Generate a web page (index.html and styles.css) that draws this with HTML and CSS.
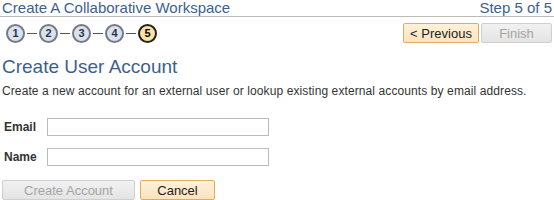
FILE: index.html
```html
<!DOCTYPE html>
<html lang="en">
<head>
    <meta charset="UTF-8">
    <title>Create A Collaborative Workspace</title>
    <link rel="stylesheet" href="styles.css">
</head>
<body>

<div class="page-header">
    <span class="page-title">Create A Collaborative Workspace</span>
    <span class="page-step">Step 5 of 5</span>
</div>

<div class="train-bar">
    <div class="train">
        <span class="stop">1</span><span class="link"></span>
        <span class="stop">2</span><span class="link"></span>
        <span class="stop">3</span><span class="link"></span>
        <span class="stop">4</span><span class="link"></span>
        <span class="stop current">5</span>
    </div>
    <div class="nav-buttons">
        <button class="btn btn-primary">&lt; Previous</button>
        <button class="btn btn-disabled" disabled>Finish</button>
    </div>
</div>

<h1 class="section-title">Create User Account</h1>
<p class="intro">Create a new account for an external user or lookup existing external accounts by email address.</p>

<div class="form">
    <div class="form-row">
        <label for="email">Email</label>
        <input type="text" id="email">
    </div>
    <div class="form-row">
        <label for="name">Name</label>
        <input type="text" id="name">
    </div>
</div>

<div class="form-buttons">
    <button class="btn btn-disabled btn-wide" disabled>Create Account</button>
    <button class="btn btn-primary btn-cancel">Cancel</button>
</div>

</body>
</html>
```

FILE: styles.css
```css
body {
    margin: 0;
    padding: 0 2px;
    width: 550px;
    font-family: "Liberation Sans", Arial, sans-serif;
    font-size: 12px;
    color: #333;
    background: #fff;
}
.page-header {
    display: flex;
    justify-content: space-between;
    align-items: flex-end;
    height: 16px;
    border-bottom: 1px solid #bbb;
    margin: 0 -2px;
    padding: 0 2px;
    font-size: 15px;
    line-height: 16px;
    color: #3d5f8e;
}
.page-title {
    margin-top: -2px;
}
.train-bar {
    display: flex;
    justify-content: space-between;
    align-items: center;
    margin-top: 6px;
    height: 20px;
}
.train {
    display: flex;
    align-items: center;
    padding-left: 4px;
}
.stop {
    box-sizing: border-box;
    width: 19px;
    height: 19px;
    border: 2px solid #7a7a7a;
    border-radius: 50%;
    background: #d7e2f7;
    color: #333;
    font-weight: bold;
    font-size: 11px;
    line-height: 15px;
    text-align: center;
}
.stop.current {
    background: #fbe3a0;
    border-color: #222;
    color: #000;
}
.link {
    width: 10px;
    height: 1px;
    margin: 0 2px;
    background: #555;
}
.nav-buttons {
    display: flex;
    gap: 2px;
}
.btn {
    box-sizing: border-box;
    height: 20px;
    padding: 0;
    font-family: "Liberation Sans", Arial, sans-serif;
    font-size: 13px;
    white-space: nowrap;
    border-radius: 2px;
    cursor: pointer;
}
.btn-primary {
    background: linear-gradient(to bottom, #fff1d9, #fbe3bd);
    border: 1px solid #e3aa64;
    color: #222;
}
.btn-disabled {
    background: linear-gradient(to bottom, #f1f1f1, #e4e4e4);
    border: 1px solid #cfcfcf;
    color: #a3a3a3;
    cursor: default;
}
.nav-buttons .btn-primary {
    width: 76px;
}
.nav-buttons .btn-disabled {
    width: 71px;
}
.section-title {
    margin: 13px 0 0 0;
    font-size: 19px;
    font-weight: normal;
    line-height: 22px;
    color: #3d5f8e;
}
.intro {
    margin: 6px 0 0 0;
    line-height: 14px;
    letter-spacing: 0.1px;
}
.form {
    margin-top: 20px;
    display: flex;
    flex-direction: column;
    gap: 12px;
}
.form-row {
    display: flex;
    align-items: center;
}
.form-row label {
    width: 43px;
    padding-left: 2px;
    font-weight: bold;
    color: #333;
}
.form-row input {
    box-sizing: border-box;
    width: 222px;
    height: 18px;
    border: 1px solid #bbb;
    margin: 0;
}
.form-buttons {
    display: flex;
    gap: 5px;
    margin-top: 14px;
}
.btn-wide {
    width: 133px;
}
.btn-cancel {
    width: 75px;
}
```
